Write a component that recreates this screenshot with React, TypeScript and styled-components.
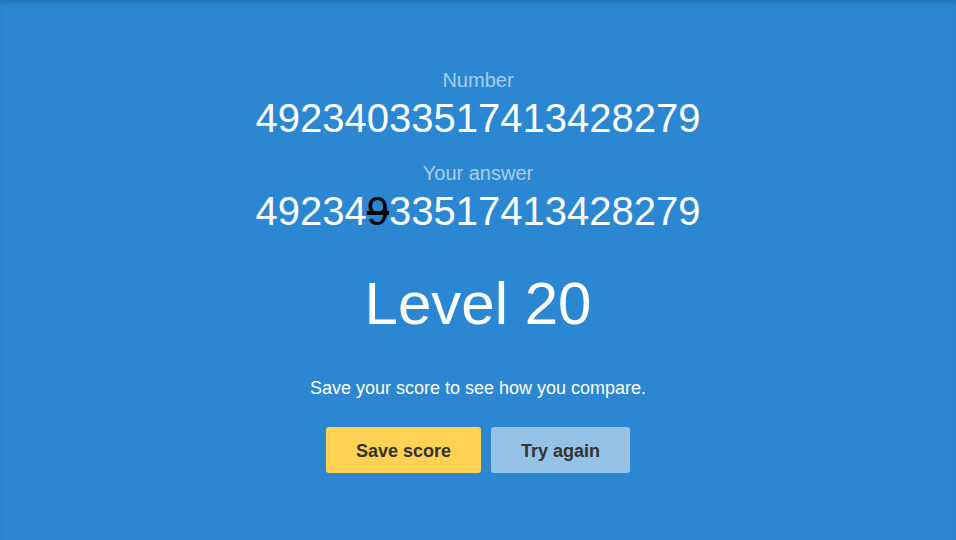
import React from "react";
import styled, { createGlobalStyle } from "styled-components";

const GlobalStyle = createGlobalStyle`
  html, body {
    margin: 0;
    padding: 0;
    background: #2b87d1;
    font-family: "Liberation Sans", Arial, sans-serif;
  }
`;

const Screen = styled.div`
  width: 956px;
  height: 540px;
  background: #2b87d1;
  box-shadow: inset 0 6px 6px -4px rgba(0, 0, 0, 0.2);
  display: flex;
  flex-direction: column;
  align-items: center;
  color: #fff;
  padding-top: 68px;
  box-sizing: border-box;
`;

const Label = styled.div`
  font-size: 20px;
  line-height: 24px;
  color: rgba(255, 255, 255, 0.6);
`;

const BigNumber = styled.div`
  font-size: 40px;
  line-height: 52px;
  margin-bottom: 17px;
`;

const Wrong = styled.span`
  color: #000;
  text-decoration: line-through;
`;

const Level = styled.div`
  font-size: 60px;
  line-height: 72px;
  margin-top: 14px;
`;

const Hint = styled.p`
  font-size: 18px;
  line-height: 24px;
  margin: 36px 0 0;
`;

const Buttons = styled.div`
  display: flex;
  gap: 10px;
  margin-top: 27px;
`;

const Button = styled.button<{ $primary?: boolean }>`
  height: 46px;
  padding: 2px 30px 0;
  border: none;
  border-radius: 3px;
  font-family: "Liberation Sans", Arial, sans-serif;
  font-size: 18px;
  font-weight: bold;
  color: #333;
  background: ${(p) => (p.$primary ? "#ffd154" : "rgba(255, 255, 255, 0.5)")};
  cursor: pointer;
`;

export default function App() {
  const number = "49234033517413428279";
  const answer = "49234933517413428279";

  return (
    <>
      <GlobalStyle />
      <Screen>
        <Label>Number</Label>
        <BigNumber>{number}</BigNumber>
        <Label>Your answer</Label>
        <BigNumber>
          {answer.split("").map((d, i) =>
            d === number[i] ? d : <Wrong key={i}>{d}</Wrong>
          )}
        </BigNumber>
        <Level>Level 20</Level>
        <Hint>Save your score to see how you compare.</Hint>
        <Buttons>
          <Button $primary>Save score</Button>
          <Button>Try again</Button>
        </Buttons>
      </Screen>
    </>
  );
}
